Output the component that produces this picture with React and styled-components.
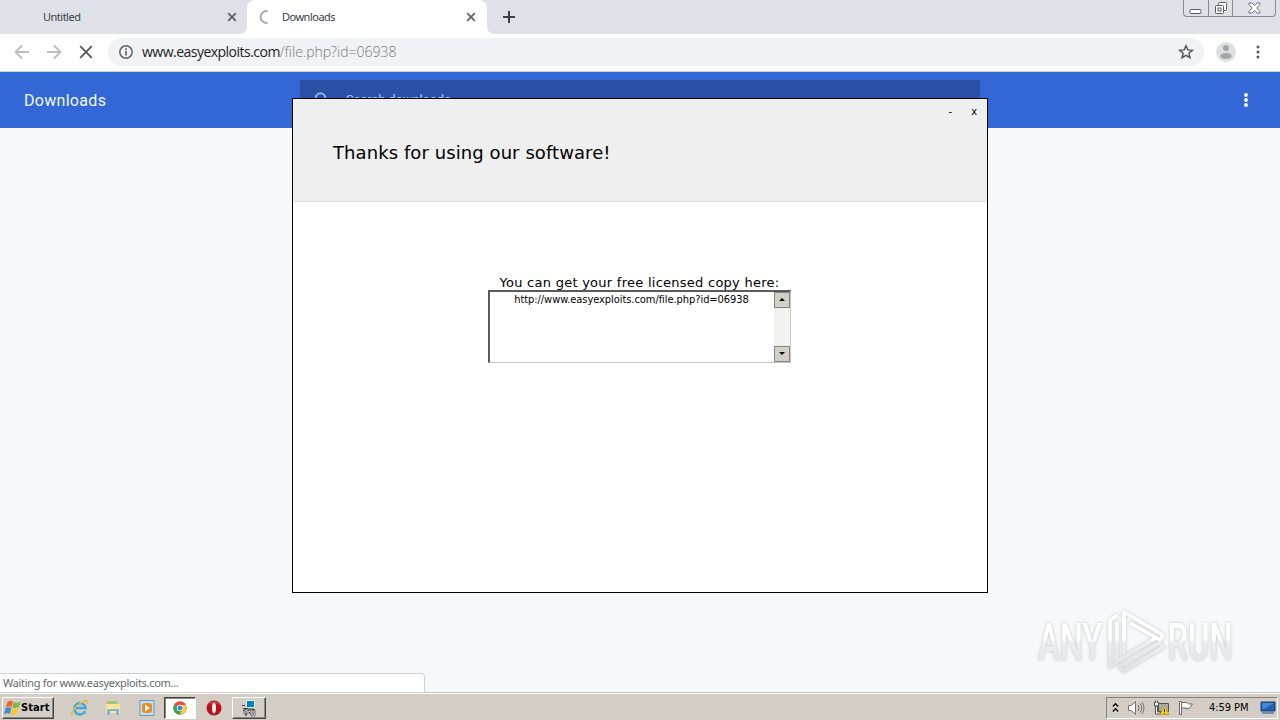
import styled, { createGlobalStyle } from "styled-components";

const GlobalStyle = createGlobalStyle`
  * {
    box-sizing: border-box;
  }

  body {
    margin: 0;
    overflow: hidden;
    font-family: "DejaVu Sans Condensed", "DejaVu Sans", sans-serif;
    font-size: 11px;
    color: #000;
  }

  svg {
    display: block;
    flex: none;
  }
`;

const Desktop = styled.div`
  position: relative;
  display: flex;
  flex-direction: column;
  width: 1280px;
  height: 720px;
  overflow: hidden;
`;

/* browser */

const TabStrip = styled.div`
  display: flex;
  height: 34px;
  background: #dee1e8;
`;

const Tab = styled.div`
  position: relative;
  display: flex;
  align-items: center;
  width: ${(props) => (props.$active ? "240px" : "247px")};
  height: 34px;
  padding: ${(props) => (props.$active ? "0 11px" : "0 10px 0 43px")};
  border-radius: 8px 8px 0 0;
  background: ${(props) => (props.$active ? "#fff" : "transparent")};
  color: #3c4043;

  /* flared feet of the active tab */
  &::before,
  &::after {
    content: ${(props) => (props.$active ? '""' : "none")};
    position: absolute;
    bottom: 0;
    width: 7px;
    height: 7px;
  }

  &::before {
    left: -7px;
    background: radial-gradient(circle at 0 0, transparent 6.5px, #fff 7.2px);
  }

  &::after {
    right: -7px;
    background: radial-gradient(circle at 100% 0, transparent 6.5px, #fff 7.2px);
  }
`;

const TabTitle = styled.span`
  flex: 1;
  font-family: "Noto Sans", sans-serif;
  font-size: 11px;
  line-height: 34px;
  letter-spacing: -0.5px;
  padding-left: ${(props) => props.$indent || "0"};
`;

const NewTab = styled.div`
  display: flex;
  align-items: center;
  padding-left: 15px;
`;

const WindowButtons = styled.div`
  display: flex;
  width: 93px;
  height: 17px;
  margin: 0 4px 0 auto;
  border: 1px solid #858991;
  border-top: 0;
  border-radius: 0 0 4px 4px;
`;

const WindowButton = styled.div`
  display: flex;
  align-items: center;
  justify-content: center;
  width: ${(props) => props.$width};
  border-right: ${(props) => (props.$last ? "0" : "1px solid #858991")};
`;

const Toolbar = styled.div`
  display: flex;
  align-items: center;
  height: 38px;
  padding: 0 14px 1px;
  background: #fff;
  border-bottom: 1px solid #ccd1da;
`;

const NavButtons = styled.div`
  display: flex;
  gap: 16px;
  width: 94px;
`;

const AddressBar = styled.div`
  display: flex;
  align-items: center;
  width: 1096px;
  height: 28px;
  padding: 0 10px;
  border-radius: 14px;
  background: #f0f2f5;
`;

const Url = styled.span`
  flex: 1;
  padding-left: 8px;
  font-family: "Open Sans", sans-serif;
  font-size: 14px;
  font-weight: 300;
  line-height: 26px;
  color: #202124;
`;

const UrlHost = styled.span`
  font-weight: 400;
  letter-spacing: -0.52px;
`;

const UrlPath = styled.span`
  color: #75797e;
`;

const ToolbarEnd = styled.div`
  display: flex;
  align-items: center;
  gap: 19px;
  padding-left: 12px;
`;

const PageHeader = styled.div`
  display: flex;
  height: 56px;
  padding: 8px 26px 0 24px;
  background: #3367d6;
`;

const PageTitle = styled.div`
  width: 276px;
  font-family: Roboto, sans-serif;
  font-size: 16px;
  line-height: 41px;
  letter-spacing: 0.3px;
  color: #f2f8ff;
`;

const SearchBox = styled.div`
  display: flex;
  width: 680px;
  height: 40px;
  padding: 11px 14px;
  gap: 17px;
  background: #2a50a8;
  color: #a9cdfa;
`;

const SearchHint = styled.span`
  font-family: Roboto, sans-serif;
  font-size: 13px;
  line-height: 18px;
  letter-spacing: -0.12px;
`;

const PageMenu = styled.div`
  display: flex;
  align-items: center;
  height: 40px;
  margin-left: auto;
`;

const PageBody = styled.div`
  flex: 1;
  background: #f6f9fc;
`;

const StatusBubble = styled.div`
  position: absolute;
  left: 0;
  top: 673px;
  width: 425px;
  height: 20px;
  padding-left: 3px;
  border: 1px solid #cdd0d3;
  border-left: 0;
  border-radius: 0 4px 0 0;
  background: #fff;
  font-family: "Noto Sans", sans-serif;
  font-size: 11px;
  line-height: 18px;
  letter-spacing: -0.3px;
  color: #63676b;
`;

const Watermark = styled.div`
  position: absolute;
  left: 1036px;
  top: 606px;
`;

/* dialog */

const Dialog = styled.div`
  position: absolute;
  left: 292px;
  top: 98px;
  width: 696px;
  height: 495px;
  border: 1px solid #000;
  background: #fff;
`;

const DialogHeader = styled.div`
  height: 103px;
  border-bottom: 1px solid #e0e0e0;
  background: #efefef;
`;

const DialogButtons = styled.div`
  display: flex;
  justify-content: flex-end;
  gap: 19px;
  height: 26px;
  padding-right: 10px;
  line-height: 25px;
`;

const DialogTitle = styled.div`
  padding: 14px 0 0 40px;
  font-family: "DejaVu Sans", sans-serif;
  font-size: 18px;
  line-height: 28px;
  letter-spacing: 0.08px;
`;

const DialogBody = styled.div`
  display: flex;
  flex-direction: column;
  align-items: center;
  padding: 73px 1px 0 0;
`;

const Caption = styled.div`
  height: 15px;
  font-family: "DejaVu Sans", sans-serif;
  font-size: 13px;
  line-height: 16px;
  letter-spacing: 0.26px;
  white-space: nowrap;
`;

const LinkBox = styled.div`
  display: flex;
  width: 303px;
  height: 73px;
  border: 1px solid #c9c8c4;
  border-top: 2px solid #5c5b59;
  border-left: 2px solid #5c5b59;
`;

const LinkText = styled.div`
  flex: 1;
  padding-right: 1px;
  font-size: 11px;
  line-height: 15px;
  text-align: center;
  letter-spacing: -0.06px;
`;

const ScrollBar = styled.div`
  display: flex;
  flex-direction: column;
  justify-content: space-between;
  width: 16px;
  background: #f3f2ef;
`;

const ScrollButton = styled.div`
  display: flex;
  align-items: center;
  justify-content: center;
  width: 16px;
  height: 16px;
  border: 1px solid #85837e;
  background: #d4d0c8;
`;

/* taskbar */

const TaskBar = styled.div`
  display: flex;
  align-items: center;
  height: 28px;
  padding: 3px 2px 1px;
  border-top: 1px solid #c5c3bc;
  box-shadow: inset 0 1px #fff;
  background: #d4cdc5;
`;

const StartButton = styled.div`
  display: flex;
  align-items: center;
  width: 52px;
  height: 22px;
  padding-left: 1px;
  border: 1px solid;
  border-color: #fff #45433f #45433f #fff;
  box-shadow: inset -1px -1px #8b8882;
  font-size: 11px;
  font-weight: bold;
  letter-spacing: 0.1px;
`;

const QuickLaunch = styled.div`
  display: flex;
  padding-left: 10px;
`;

const TaskItem = styled.div`
  display: flex;
  align-items: center;
  justify-content: center;
  width: ${(props) => props.$width || "34px"};
  height: 22px;
  border: 1px solid transparent;
  ${(props) =>
    props.$pressed &&
    "background: #fff; border-color: #45433f #fff #fff #45433f; box-shadow: inset 1px 1px #8b8882;"}
  ${(props) =>
    props.$raised &&
    "border-color: #fff #45433f #45433f #fff; box-shadow: inset -1px -1px #8b8882;"}
`;

const Tray = styled.div`
  display: flex;
  align-items: center;
  width: 172px;
  height: 22px;
  margin-left: auto;
  padding: 0 0 0 4px;
  border: 1px solid;
  border-color: #85827d #fff #fff #85827d;
`;

const TrayIcons = styled.div`
  display: flex;
  align-items: center;
  gap: 8px;
`;

const Clock = styled.div`
  width: 65px;
  padding-left: 14px;
  font-size: 11px;
  letter-spacing: -0.05px;
  white-space: nowrap;
`;

const CloseIcon = () => (
  <svg width="10" height="10" viewBox="0 0 10 10">
    <path d="M1.2 1.2 8.8 8.8M8.8 1.2 1.2 8.8" stroke="#5f6368" strokeWidth="1.8" />
  </svg>
);

const ArrowIcon = ({ flip }) => (
  <svg width="16" height="16" viewBox="0 0 16 16" fill="none" stroke="#bbbdc0" strokeWidth="1.8">
    <path d={flip ? "M1 8h13M8 1.5 14.5 8 8 14.5" : "M15 8H2M8 1.5 1.5 8 8 14.5"} />
  </svg>
);

const AnyRunLogo = () => (
  <svg width="205" height="72" viewBox="0 0 205 72" fill="none">
    <defs>
      <linearGradient id="metal" x1="0" y1="10" x2="0" y2="62" gradientUnits="userSpaceOnUse">
        <stop offset="0" stopColor="#fff" />
        <stop offset="0.46" stopColor="#fff" />
        <stop offset="0.5" stopColor="#eceeef" />
        <stop offset="1" stopColor="#e2e4e5" />
      </linearGradient>
      <filter id="glow" x="0" y="0" width="205" height="72" filterUnits="userSpaceOnUse">
        <feDropShadow dx="0" dy="0" stdDeviation="1.5" floodColor="#888" floodOpacity="0.55" />
      </filter>
    </defs>
    <g filter="url(#glow)">
      <g fill="url(#metal)" fontFamily="Roboto, sans-serif" fontSize="51" fontWeight="500">
        <text transform="translate(2 54) scale(0.64 1) translate(0 -54)" x="0" y="54">ANY</text>
        <text transform="translate(131.5 54) scale(0.64 1) translate(0 -54)" x="0" y="54">RUN</text>
      </g>
      <g stroke="url(#metal)" strokeWidth="3.6" strokeLinejoin="round">
        <path d="M88 48V6l39 23-3 5-30-17" />
        <path d="M82 9l-8 5v47l7-4V16" />
        <path d="M81 55l10-6 29-17M84 62l4 3 39-24-4-4-39 23z" />
      </g>
    </g>
  </svg>
);

const StartFlag = () => (
  <svg width="17" height="16" viewBox="0 0 17 16">
    <path d="M3.5 2Q6.5-.2 9 1.6L7.6 7Q4.7 5.5 1.8 7.4Z" fill="#ee6330" />
    <path d="M9.8 2Q12.6 3.6 16.8 1.4L15 7Q11.3 9 8.3 7.5Z" fill="#81b941" />
    <path d="M1.5 8.3Q4.5 6.5 7.3 8L5.8 13.8Q3.2 12.4 0 14.2Z" fill="#418ad1" />
    <path d="M8 8.3Q11 9.8 14.7 7.9L13 13.7Q9.5 15.7 6.5 14.1Z" fill="#f5c63a" />
  </svg>
);

const ExplorerIcon = () => (
  <svg width="18" height="18" viewBox="0 0 18 18" fill="none">
    <path d="M14.2 12.2A5.7 5.7 0 1 1 14.7 9H5" stroke="#3fa5dc" strokeWidth="2.4" />
    <path d="M5 7.8Q9 4.2 13 7.8" stroke="#87d0f2" strokeWidth="1" />
    <path d="M2.2 14.8C-1 17 .3 12 6.5 6.3 12 1.8 18-.7 16.2 4.4" stroke="#e6bd3c" strokeWidth="1.4" />
  </svg>
);

const FolderIcon = () => (
  <svg width="18" height="18" viewBox="0 0 18 18">
    <path d="M2 3h5l1 2h7v9H2z" fill="#e6bd55" />
    <path d="M4 2h9v3H4z" fill="#9cc87d" />
    <path d="M2 5h14v9H2z" fill="#f8e49a" />
    <path d="M3 16v-5q0-1 1-1h10q1 0 1 1v5h-3v-4H6v4z" fill="#7db7df" />
  </svg>
);

const MediaIcon = () => (
  <svg width="18" height="18" viewBox="0 0 18 18">
    <path d="M2 1.5h14v15H2z" fill="#c5e0f3" stroke="#5a9acb" />
    <rect x="4" y="4" width="10" height="10" rx="3" fill="#f28b16" />
    <path d="M7 5.5 12 9l-5 3.5z" fill="#fff" />
  </svg>
);

const ChromeIcon = () => (
  <svg width="14" height="14" viewBox="0 0 14 14">
    <circle cx="7" cy="7" r="6.7" fill="#e34b3e" />
    <path d="M7 7 1.2 3.65A6.7 6.7 0 0 0 6.4 13.7L10 8.5z" fill="#35a853" />
    <path d="M7 4h6A6.7 6.7 0 0 1 6.4 13.7L9.7 8.5z" fill="#f8cd36" />
    <circle cx="7" cy="7" r="3.2" fill="#fff" />
    <circle cx="7" cy="7" r="2.5" fill="#4285d4" />
  </svg>
);

const OperaIcon = () => (
  <svg width="16" height="16" viewBox="0 0 16 16">
    <circle cx="8" cy="8" r="7.5" fill="#b4131b" />
    <path d="M2 5a7 7 0 0 1 12 0Q8 1 2 5" fill="#d94a4b" />
    <ellipse cx="8" cy="8" rx="2" ry="5.6" fill="#fff1ef" />
  </svg>
);

const SetupIcon = () => (
  <svg width="18" height="18" viewBox="0 0 18 18">
    <path d="M6.5 1.5h8v7h-8z" fill="#0783bd" stroke="#d8eef4" />
    <path d="M8 10h6l1 1H8zM3 9.5h5M2 6.5h3" fill="#ddd" stroke="#444" />
    <path d="M11 11h4v6h-4zM4 11h4v4H4z" fill="#eee" stroke="#555" strokeWidth=".8" />
    <path d="M3 12l3-2M6 12v5M13 11v5M9 13l2 2" stroke="#333" />
  </svg>
);

const SpeakerIcon = () => (
  <svg width="17" height="16" viewBox="0 0 17 16" fill="none" stroke="#74716c">
    <path d="M.5 5.5h3L7.5 1.5v13l-4-4h-3z" fill="#fafafa" />
    <path d="M10 5q2 3 0 6M12 3.5q3.5 4.5 0 9M14 2q4 6 0 12" />
  </svg>
);

const NetworkIcon = () => (
  <svg width="17" height="16" viewBox="0 0 17 16">
    <path d="M5.5 3.5h10v8h-10z" fill="#a8aca8" stroke="#55534f" />
    <path d="M1.5 2v4h4V2M2.5.5V3M4.5.5V3M2.5 6v8h5v-2h-3V6z" fill="#fff" stroke="#55534f" />
    <path d="M11.5 6 16 14.5H7z" fill="#f5d619" stroke="#b99709" strokeWidth=".7" />
    <path d="M11.5 9v3m0 1v1" stroke="#332b0a" />
  </svg>
);

const FlagIcon = () => (
  <svg width="17" height="16" viewBox="0 0 17 16" fill="#fafafa" stroke="#6b6965">
    <path d="M1.5 1.5h2v13h-2z" />
    <path d="M3.5 2.5h5q1 2 6 1.5-2 5-6 5v-1h-5z" />
  </svg>
);

const DesktopIcon = () => (
  <svg width="16" height="14" viewBox="0 0 16 14">
    <path d="M1 1h14v9H1z" fill="#225fae" stroke="#173d75" />
    <path d="M2 2h12L4 8H2z" fill="#4386d2" />
    <path d="M2 12h12" stroke="#7190af" strokeWidth="2" />
  </svg>
);

const Browser = () => (
  <>
    <TabStrip>
      <Tab>
        <TabTitle>Untitled</TabTitle>
        <CloseIcon />
      </Tab>
      <Tab $active>
        <svg width="14" height="14" viewBox="0 0 14 14" fill="none">
          <path d="M9.5 1.2A5.9 5.9 0 1 0 9.5 12.8" stroke="#aaa" strokeWidth="2" />
        </svg>
        <TabTitle $indent="10px">Downloads</TabTitle>
        <CloseIcon />
      </Tab>
      <NewTab>
        <svg width="14" height="14" viewBox="0 0 14 14">
          <path d="M7 1v12M1 7h12" stroke="#3c4043" strokeWidth="2" />
        </svg>
      </NewTab>
      <WindowButtons>
        <WindowButton $width="25px">
          <svg width="13" height="14" viewBox="0 0 13 14">
            <rect x="1" y="8.5" width="11" height="4" rx="1" fill="#fff" stroke="#575b64" />
          </svg>
        </WindowButton>
        <WindowButton $width="25px">
          <svg width="13" height="14" viewBox="0 0 13 14" fill="#fff" stroke="#575b64">
            <rect x="4.5" y="1.5" width="8" height="8" rx="1" />
            <rect x="1.5" y="4.5" width="8" height="8" rx="1" />
            <rect x="4" y="7" width="3" height="3" />
          </svg>
        </WindowButton>
        <WindowButton $width="42px" $last>
          <svg width="13" height="12" viewBox="0 0 13 12">
            <path
              d="M1 1h3l2.5 2.6L9 1h3v1.5L8.8 6l3.2 3.5V11H9L6.5 8.4 4 11H1V9.5L4.2 6 1 2.5z"
              fill="#fff"
              stroke="#686c74"
            />
          </svg>
        </WindowButton>
      </WindowButtons>
    </TabStrip>
    <Toolbar>
      <NavButtons>
        <ArrowIcon />
        <ArrowIcon flip />
        <svg width="16" height="16" viewBox="0 0 16 16">
          <path d="M2.2 2.2 13.8 13.8M13.8 2.2 2.2 13.8" stroke="#55585c" strokeWidth="1.8" />
        </svg>
      </NavButtons>
      <AddressBar>
        <svg width="16" height="16" viewBox="0 0 16 16" fill="none" stroke="#606368">
          <circle cx="8" cy="8" r="6.2" strokeWidth="1.5" />
          <path d="M8 7v4.5M8 4.3V6" strokeWidth="1.7" />
        </svg>
        <Url>
          <UrlHost>www.easyexploits.com</UrlHost>
          <UrlPath>/file.php?id=06938</UrlPath>
        </Url>
        <svg width="16" height="16" viewBox="0 0 16 16">
          <path
            d="m8 1.8 1.8 4.1 4.6.4-3.5 3 1.1 4.4L8 11.3l-4 2.4 1.1-4.4-3.5-3 4.6-.4z"
            fill="none"
            stroke="#55585d"
            strokeWidth="1.5"
          />
        </svg>
      </AddressBar>
      <ToolbarEnd>
        <svg width="20" height="20" viewBox="0 0 20 20">
          <circle cx="10" cy="10" r="10" fill="#dedfe1" />
          <circle cx="10" cy="6" r="3" fill="#a2a4a7" />
          <ellipse cx="10" cy="14" rx="5.8" ry="3" fill="#a2a4a7" />
        </svg>
        <svg width="6" height="16" viewBox="0 0 6 16" fill="#55585c">
          <circle cx="3" cy="3" r="1.5" />
          <circle cx="3" cy="8" r="1.5" />
          <circle cx="3" cy="13" r="1.5" />
        </svg>
      </ToolbarEnd>
    </Toolbar>
    <PageHeader>
      <PageTitle>Downloads</PageTitle>
      <SearchBox>
        <svg width="15" height="16" viewBox="0 0 15 16" fill="none" stroke="#80b7f5" strokeWidth="2">
          <circle cx="6.5" cy="7" r="4.8" />
          <path d="m10 11 4 4" />
        </svg>
        <SearchHint>Search downloads</SearchHint>
      </SearchBox>
      <PageMenu>
        <svg width="16" height="16" viewBox="0 0 16 16" fill="#fff">
          <circle cx="8" cy="3" r="1.9" />
          <circle cx="8" cy="8" r="1.9" />
          <circle cx="8" cy="13" r="1.9" />
        </svg>
      </PageMenu>
    </PageHeader>
    <PageBody />
  </>
);

const ThanksDialog = () => (
  <Dialog>
    <DialogHeader>
      <DialogButtons>
        <span>-</span>
        <span>x</span>
      </DialogButtons>
      <DialogTitle>Thanks for using our software!</DialogTitle>
    </DialogHeader>
    <DialogBody>
      <Caption>You can get your free licensed copy here:</Caption>
      <LinkBox>
        <LinkText>http://www.easyexploits.com/file.php?id=06938</LinkText>
        <ScrollBar>
          <ScrollButton>
            <svg width="6" height="4" viewBox="0 0 6 4">
              <path d="M3 0 6 3H0z" />
            </svg>
          </ScrollButton>
          <ScrollButton>
            <svg width="6" height="4" viewBox="0 0 6 4">
              <path d="M0 0h6L3 3z" />
            </svg>
          </ScrollButton>
        </ScrollBar>
      </LinkBox>
    </DialogBody>
  </Dialog>
);

const App = () => {
  return (
    <Desktop>
      <GlobalStyle />
      <Browser />
      <StatusBubble>Waiting for www.easyexploits.com...</StatusBubble>
      <Watermark>
        <AnyRunLogo />
      </Watermark>
      <TaskBar>
        <StartButton>
          <StartFlag />
          Start
        </StartButton>
        <QuickLaunch>
          <TaskItem $width="32px"><ExplorerIcon /></TaskItem>
          <TaskItem><FolderIcon /></TaskItem>
          <TaskItem><MediaIcon /></TaskItem>
          <TaskItem $width="32px" $pressed><ChromeIcon /></TaskItem>
          <TaskItem $width="36px"><OperaIcon /></TaskItem>
          <TaskItem $raised><SetupIcon /></TaskItem>
        </QuickLaunch>
        <Tray>
          <TrayIcons>
            <svg width="9" height="14" viewBox="0 0 9 14" fill="none" stroke="#111" strokeWidth="1.5">
              <path d="M1.8 5.5 4.5 2.8l2.7 2.7M1.8 10.5l2.7-2.7 2.7 2.7" />
            </svg>
            <SpeakerIcon />
            <NetworkIcon />
            <FlagIcon />
          </TrayIcons>
          <Clock>4:59 PM</Clock>
          <DesktopIcon />
        </Tray>
      </TaskBar>
      <ThanksDialog />
    </Desktop>
  );
};

export default App;
